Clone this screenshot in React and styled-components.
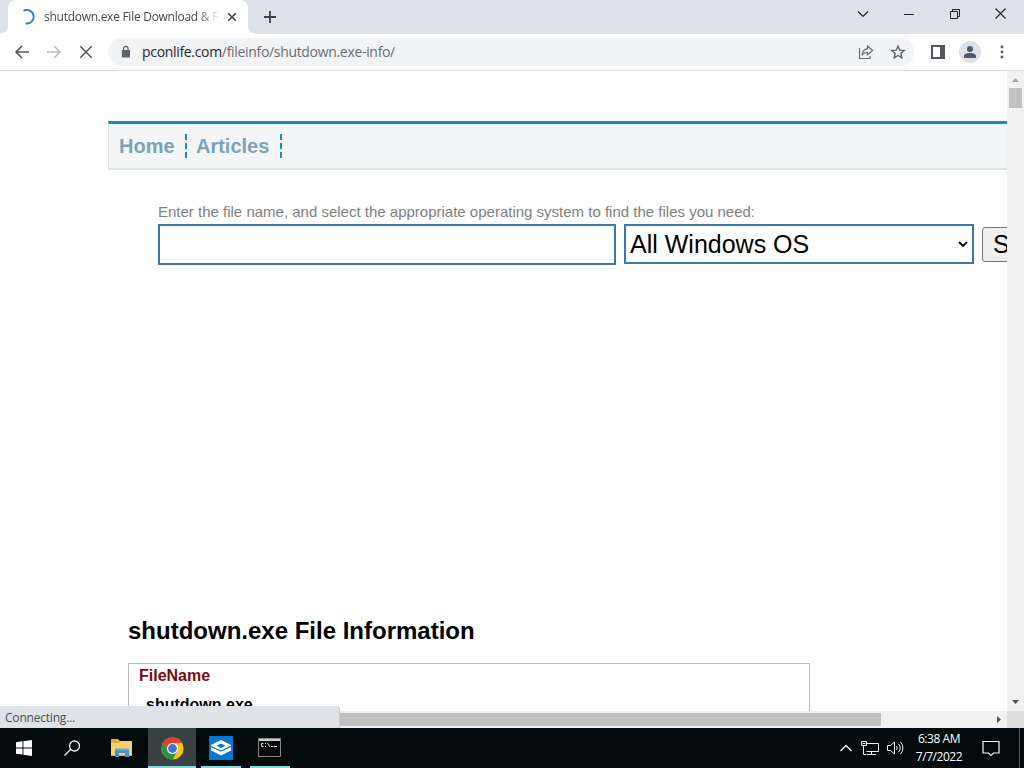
import React, { useState } from "react";
import styled, { createGlobalStyle } from "styled-components";

const GlobalStyle = createGlobalStyle`
  * {
    box-sizing: border-box;
  }

  body {
    margin: 0;
    overflow: hidden;
    font-family: "Liberation Sans", Arial, sans-serif;
  }

  svg {
    display: block;
    flex: none;
  }
`;

const Desktop = styled.main`
  position: relative;
  display: flex;
  flex-direction: column;
  width: 1024px;
  height: 768px;
  overflow: hidden;
  background-color: #fff;
`;

const TabStrip = styled.header`
  display: flex;
  height: 34px;
  padding-left: 8px;
  background-color: #dee1e6;
`;

const Tab = styled.div`
  position: relative;
  display: flex;
  align-items: center;
  width: 240px;
  padding: 0 9px 0 13px;
  border-radius: 8px 8px 0 0;
  background-color: #fff;

  &::before,
  &::after {
    content: "";
    position: absolute;
    bottom: 0;
    width: 8px;
    height: 8px;
  }

  &::before {
    left: -8px;
    background: radial-gradient(circle at 0 0, transparent 7.5px, #fff 8px);
  }

  &::after {
    right: -8px;
    background: radial-gradient(circle at 100% 0, transparent 7.5px, #fff 8px);
  }
`;

const TabTitle = styled.span`
  width: 174px;
  margin: 0 9px 0 7px;
  overflow: hidden;
  white-space: nowrap;
  font: 12px/18px "Open Sans", "Noto Sans", sans-serif;
  letter-spacing: -0.27px;
  color: #45484c;
  mask-image: linear-gradient(to right, #000 154px, transparent 176px);
`;

const NewTab = styled.div`
  display: flex;
  align-items: center;
  margin-left: 15px;
`;

const WindowButtons = styled.div`
  display: flex;
  margin-left: auto;
  height: 28px;
`;

const WindowButton = styled.div`
  display: flex;
  align-items: center;
  justify-content: center;
  width: 46px;
`;

const Toolbar = styled.div`
  display: flex;
  align-items: center;
  height: 37px;
  padding: 0 14px;
  border-bottom: 1px solid #d9dadb;
`;

const NavIcons = styled.div`
  display: flex;
  gap: 16px;
  margin-right: 14px;
`;

const AddressBar = styled.div`
  display: flex;
  align-items: center;
  width: 806px;
  height: 28px;
  padding: 0 8px 0 10px;
  border-radius: 14px;
  background-color: #f1f3f4;
`;

const Url = styled.span`
  flex: 1;
  margin-left: 8px;
  font: 14px/20px "Open Sans", "Noto Sans", sans-serif;
  letter-spacing: -0.32px;
  color: #6a6d71;

  b {
    font-weight: 400;
    color: #24272a;
  }
`;

const AddressIcons = styled.div`
  display: flex;
  gap: 16px;
`;

const ToolbarActions = styled.div`
  display: flex;
  align-items: center;
  margin-left: 17px;
`;

const Avatar = styled.div`
  display: flex;
  align-items: center;
  justify-content: center;
  width: 22px;
  height: 22px;
  margin: 0 19px 0 14px;
  border-radius: 50%;
  background-color: #dde2e8;
`;

const Viewport = styled.div`
  display: grid;
  grid-template-columns: 1007px 17px;
  grid-template-rows: 640px 17px;
  height: 657px;
`;

const Page = styled.div`
  overflow: hidden;
  padding: 50px 0 0 108px;
`;

const Menu = styled.nav`
  display: flex;
  align-items: center;
  width: 1000px;
  height: 49px;
  padding-left: 10px;
  border-top: 3px solid #1693ab;
  border-bottom: 2px solid #dde2e3;
  border-left: 1px solid #dde2e3;
  background-color: #f3f5f6;
`;

const MenuLink = styled.a`
  height: 24px;
  padding-right: 12.4px;
  margin-right: 9px;
  font-size: 20px;
  font-weight: bold;
  line-height: 24px;
  color: #7ba3b8;
  background: repeating-linear-gradient(#1693ab 0 6px, transparent 6px 9px) right top / 2px 24px no-repeat;
`;

const SearchForm = styled.form`
  width: 1000px;
  margin: 33px 0 0 50px;

  label {
    display: block;
    height: 21px;
    font-size: 15px;
    line-height: 18px;
    color: #808080;
  }
`;

const Fields = styled.div`
  display: flex;
  align-items: flex-start;
`;

const FileInput = styled.input`
  width: 458px;
  height: 41px;
  padding: 2px 4px;
  border: 2px solid #3b78ac;
  border-radius: 0;
  outline: none;
  font: 25px "Liberation Sans", Arial, sans-serif;
`;

const OsSelect = styled.div`
  display: flex;
  align-items: center;
  justify-content: space-between;
  width: 350px;
  height: 40px;
  margin: 0 8px;
  padding: 0 4px;
  border: 2px solid #3b78ac;
  font-size: 25px;
  color: #000;
`;

const SearchButton = styled.button`
  height: 35px;
  margin-top: 3px;
  padding: 0 10px;
  border: 1px solid #767676;
  border-radius: 3px;
  background-color: #efefef;
  font: 25px/33px "Liberation Sans", Arial, sans-serif;
  color: #000;
`;

const FileInfo = styled.section`
  width: 682px;
  margin: 351px 0 0 20px;

  h2 {
    margin: 0 0 17px;
    font-size: 24px;
    line-height: 30px;
    color: #000;
  }
`;

const InfoBox = styled.dl`
  margin: 0;
  height: 120px;
  border: 1px solid #b9b9b9;
  font-size: 16px;
  font-weight: bold;
  line-height: 18px;

  dt {
    padding: 3px 10px 0;
    color: #760a12;
  }

  dd {
    margin: 11px 17px;
    color: #000;
  }
`;

const ScrollBar = styled.div`
  display: flex;
  flex-direction: ${(props) => (props.$vertical ? "column" : "row")};
  align-items: center;
  justify-content: space-between;
  background-color: #f1f1f1;
`;

const Thumb = styled.div`
  width: ${(props) => props.$width}px;
  height: ${(props) => props.$height}px;
  background-color: #c1c1c1;
`;

const ScrollStart = styled.div`
  display: flex;
  flex-direction: column;
  align-items: center;
  gap: 6px;
  padding-top: 7px;
`;

const Corner = styled.div`
  background-color: #dcdcdc;
`;

const StatusBubble = styled.div`
  position: absolute;
  left: 0;
  bottom: 40px;
  width: 340px;
  height: 22px;
  padding-left: 5px;
  border-top-right-radius: 4px;
  border-right: 1px solid #c8cacd;
  background-color: #dfe2e6;
  font: 12px/23px "Open Sans", "Noto Sans", sans-serif;
  letter-spacing: -0.2px;
  color: #4b4e52;
`;

const Taskbar = styled.footer`
  display: flex;
  height: 40px;
  background-color: #020a0c;
  color: #fff;
`;

const TaskButton = styled.div`
  display: flex;
  align-items: center;
  justify-content: center;
  width: ${(props) => props.$width || 48}px;
  background: ${(props) => (props.$active ? "#3a4143" : "transparent")};
  box-shadow: ${(props) => (props.$active ? "inset 0 -2px #83dbe0" : "none")};
`;

const RunningButton = styled(TaskButton)`
  width: 40px;
  margin: ${(props) => props.$margin};
  padding-right: ${(props) => props.$shift || 0}px;
  box-shadow: inset 0 -2px #83dbe0;
`;

const Tray = styled.div`
  display: flex;
  align-items: center;
  margin-left: auto;
  padding-right: 4px;
`;

const Clock = styled.div`
  width: 56px;
  margin: 0 15px 0 6px;
  text-align: center;
  white-space: nowrap;
  font: 12px/18px "Open Sans", "Noto Sans", sans-serif;
  letter-spacing: -0.45px;
`;

const ShowDesktop = styled.div`
  width: 1px;
  height: 40px;
  margin-left: 19px;
  background-color: #53595b;
`;

const Line = ({ width, height, d, color = "#222", stroke = 1 }) => (
  <svg width={width} height={height} viewBox={`0 0 ${width} ${height}`}>
    <path d={d} fill="none" stroke={color} strokeWidth={stroke} />
  </svg>
);

const Solid = ({ width, height, d, color = "#505050" }) => (
  <svg width={width} height={height} viewBox={`0 0 ${width} ${height}`}>
    <path d={d} fill={color} fillRule="evenodd" />
  </svg>
);

const FolderIcon = () => (
  <svg width="22" height="20" viewBox="0 0 22 20">
    <path d="M0 1h7l2 2h12v15H0z" fill="#e5ad37" />
    <path d="M0 5h8l2-2h11v14H0z" fill="#f5d070" />
    <path d="M4 19v-8h14v8h-4v-4H8v4z" fill="#4a90c8" />
    <path d="M4 10.5h14v2H4z" fill="#69a5d3" />
  </svg>
);

const ChromeIcon = () => (
  <svg width="23" height="23" viewBox="0 0 24 24">
    <circle cx="12" cy="12" r="11.5" fill="#fbc116" />
    <path d="M2.04 6.25A11.5 11.5 0 0 1 21.96 6.25H12L7 14.9z" fill="#e33b2e" />
    <path d="M2.04 6.25A11.5 11.5 0 0 0 12 23.5L17 14.9H7z" fill="#229342" />
    <circle cx="12" cy="12" r="5.8" fill="#fff" />
    <circle cx="12" cy="12" r="4.6" fill="#3973dc" />
  </svg>
);

const StackIcon = () => (
  <svg width="24" height="24" viewBox="0 0 24 24">
    <path d="M0 0h24v24H0z" fill="#0875ce" />
    <path d="M12 4L2 9v5.5l10 5 10-5V9z" fill="#fff" />
    <path d="M12 7.5L7.5 9.7 12 12l4.5-2.3z" fill="#0875ce" />
    <path d="M2 10.5l10 4.6 10-4.6" fill="none" stroke="#0875ce" strokeWidth="1.2" />
  </svg>
);

const ConsoleIcon = () => (
  <svg width="23" height="20" viewBox="0 0 23 20">
    <path d="M.5.5h22v18H.5z" fill="#070707" stroke="#85898a" />
    <path d="M1 1h21v2H1z" fill="#c9cdcd" />
    <path d="M5.5 5.5h-2v3h2M7.5 5v1.2M7.5 7.8V9M9.5 5l2.5 4M13 8.5h2M15.5 8.5H19" fill="none" stroke="#ddd" />
  </svg>
);

function App() {
  const [fileName, setFileName] = useState("");

  return (
    <>
      <GlobalStyle />
      <Desktop>
        <TabStrip>
          <Tab>
            <Line width={16} height={16} d="M2.5 1.8A6.8 6.8 0 1 1 4.6 14.4" color="#397bc5" stroke={1.9} />
            <TabTitle>shutdown.exe File Download &amp; Fix</TabTitle>
            <Line width={10} height={10} d="M1.2 1.2l7.6 7.6M8.8 1.2L1.2 8.8" color="#3c4043" stroke={1.6} />
          </Tab>
          <NewTab>
            <Line width={14} height={14} d="M7 1v12M1 7h12" color="#3c4043" stroke={1.8} />
          </NewTab>
          <WindowButtons>
            <WindowButton>
              <Line width={12} height={8} d="M1 1.5l5 5 5-5" stroke={1.2} />
            </WindowButton>
            <WindowButton>
              <Line width={10} height={2} d="M0 1.5h10" />
            </WindowButton>
            <WindowButton>
              <Line width={11} height={11} d="M.5 2.5h7v7h-7zM2.5 2.5v-2h7v7h-2" />
            </WindowButton>
            <WindowButton>
              <Line width={12} height={12} d="M.5.5l10 10M10.5.5l-10 10" stroke={1.1} />
            </WindowButton>
          </WindowButtons>
        </TabStrip>

        <Toolbar>
          <NavIcons>
            <Line width={16} height={16} d="M15 8H2M8 2L2 8l6 6" color="#54575a" stroke={1.6} />
            <Line width={16} height={16} d="M1 8h13M8 2l6 6-6 6" color="#babcbe" stroke={1.6} />
            <Line width={16} height={16} d="M2.3 2.3l11.4 11.4M13.7 2.3L2.3 13.7" color="#54575a" stroke={1.5} />
          </NavIcons>
          <AddressBar>
            <Solid width={16} height={16} color="#5f6368" d="M5 6V4.6a2.8 2.8 0 0 1 5.6 0V6h1.4v7.4H3.8V6zM6.2 6h3.2V4.6a1.6 1.6 0 0 0-3.2 0z" />
            <Url>
              <b>pconlife.com</b>/fileinfo/shutdown.exe-info/
            </Url>
            <AddressIcons>
              <Line
                width={16}
                height={16}
                d="M1.5 4v10.5h10.5V12M9.5 2l5.2 4.5-5.2 4.2V8.5C7 8.5 5 9.5 4 11.5c.3-4 2.2-6.3 5.5-6.8z"
                color="#6a6e72"
                stroke={1.2}
              />
              <Line
                width={16}
                height={16}
                d="M8 2.2l1.7 4 4.5.4-3.4 2.9 1 4.3L8 11.5l-3.8 2.3 1-4.3-3.4-2.9 4.5-.4z"
                color="#5f6368"
                stroke={1.4}
              />
            </AddressIcons>
          </AddressBar>
          <ToolbarActions>
            <Solid width={14} height={14} d="M0 0h14v14H0zM2 2v10h7V2z" color="#54575b" />
            <Avatar>
              <Solid width={12} height={12} d="M6 0a3 3 0 1 1 0 6 3 3 0 0 1 0-6M0 12v-2c0-4 12-4 12 0v2z" color="#4a5967" />
            </Avatar>
            <Solid
              width={4}
              height={14}
              d="M2 .6a1.4 1.4 0 1 1 0 2.8 1.4 1.4 0 0 1 0-2.8M2 5.6a1.4 1.4 0 1 1 0 2.8 1.4 1.4 0 0 1 0-2.8M2 10.6a1.4 1.4 0 1 1 0 2.8 1.4 1.4 0 0 1 0-2.8"
              color="#54575b"
            />
          </ToolbarActions>
        </Toolbar>

        <Viewport>
          <Page>
            <Menu>
              <MenuLink>Home</MenuLink>
              <MenuLink>Articles</MenuLink>
            </Menu>
            <SearchForm onSubmit={(e) => e.preventDefault()}>
              <label htmlFor="fileName">
                Enter the file name, and select the appropriate operating system to find the files you need:
              </label>
              <Fields>
                <FileInput id="fileName" value={fileName} onChange={(e) => setFileName(e.target.value)} />
                <OsSelect>
                  All Windows OS
                  <Line width={10} height={7} d="M1 1l4 4 4-4" color="#000" stroke={1.8} />
                </OsSelect>
                <SearchButton>Search</SearchButton>
              </Fields>
            </SearchForm>
            <FileInfo>
              <h2>shutdown.exe File Information</h2>
              <InfoBox>
                <dt>FileName</dt>
                <dd>shutdown.exe</dd>
              </InfoBox>
            </FileInfo>
          </Page>
          <ScrollBar $vertical>
            <ScrollStart>
              <Solid width={7} height={4} d="M0 4L3.5 0 7 4z" color="#a3a3a3" />
              <Thumb $width={13} $height={20} />
            </ScrollStart>
            <Solid width={7} height={13} d="M0 2h7L3.5 6z" />
          </ScrollBar>
          <ScrollBar>
            <Thumb $width={881} $height={13} />
            <Solid width={11} height={7} d="M1 0l4 3.5L1 7z" />
          </ScrollBar>
          <Corner />
        </Viewport>

        <StatusBubble>Connecting...</StatusBubble>

        <Taskbar>
          <TaskButton>
            <Solid width={16} height={16} d="M0 2.2L6.5 1.3v6.2H0zM7.4 1.2L16 0v7.5H7.4zM0 8.4h6.5v6.2L0 13.7zM7.4 8.4H16V16l-8.6-1.2z" color="#fff" />
          </TaskButton>
          <TaskButton>
            <Line width={17} height={17} d="M6.5 9.5L.5 15.5M5.5 6a5 5 0 1 0 10 0A5 5 0 1 0 5.5 6" color="#f2f2f2" stroke={1.3} />
          </TaskButton>
          <TaskButton $width={52}>
            <FolderIcon />
          </TaskButton>
          <TaskButton $active>
            <ChromeIcon />
          </TaskButton>
          <RunningButton $margin="0 9px 0 5px">
            <StackIcon />
          </RunningButton>
          <RunningButton $margin="0" $shift={2}>
            <ConsoleIcon />
          </RunningButton>
          <Tray>
            <Line width={14} height={8} d="M1.5 7L7 1.5 12.5 7" color="#fff" stroke={1.3} />
            <svg width="34" height="16" viewBox="0 0 34 16">
              <path
                d="M14 3.5h11.5v8H13.5M18.5 11.5v3M14 14.5h9M8.5 1.5h5v4h-5zM10.5 6v8.5h3M9.5 3.5h3"
                fill="none"
                stroke="#eee"
              />
            </svg>
            <Line
              width={18}
              height={16}
              d="M.5 5.5h3l4-3.5v12l-4-3.5h-3zM9.5 6q1.5 2 0 4M11.5 4q3.5 4 0 8M13.5 2q5 6 0 12"
              color="#eee"
            />
            <Clock>
              <div>6:38 AM</div>
              <div>7/7/2022</div>
            </Clock>
            <Line width={18} height={17} d="M1 1.5h16v11.5h-5.5L9 15.5 6.5 13H1z" color="#f3f3f3" stroke={1.2} />
            <ShowDesktop />
          </Tray>
        </Taskbar>
      </Desktop>
    </>
  );
}

export default App;
